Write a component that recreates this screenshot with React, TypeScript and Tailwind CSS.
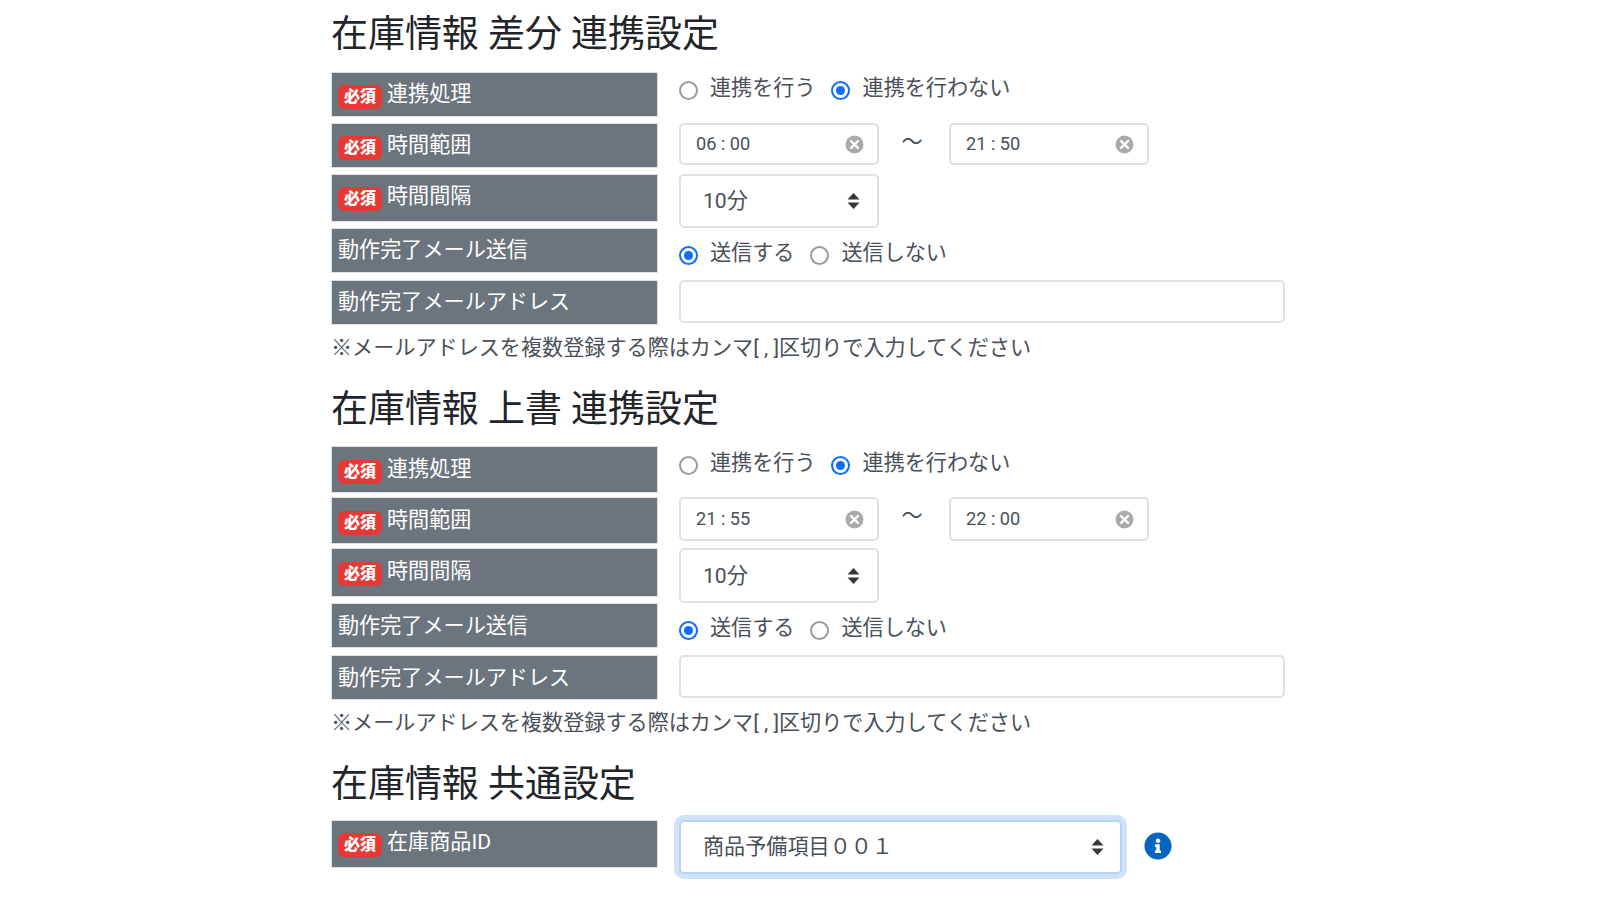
import React from "react";
import { FaInfoCircle } from "react-icons/fa";

const FONT = { fontFamily: 'Roboto, "Noto Sans CJK JP", sans-serif' };

function Badge({ low }: { low?: boolean }) {
  return (
    <span className={`inline-flex items-center justify-center w-[44px] h-[24px] rounded-[6px] bg-[#e53935] text-white text-[16px] font-black leading-none mr-[5px] shrink-0 ${low ? "mt-[13px]" : "mt-[12px]"}`}>
      必須
    </span>
  );
}

function Label({ text, required, h = "h-[45px]", low }: { text: string; required?: boolean; h?: string; low?: boolean }) {
  return (
    <div className={`w-[327px] ${h} shrink-0 bg-[#6c757d] border border-[#dee2e6] flex items-start pl-[6px] text-white text-[21.12px] ${low ? "leading-[44px]" : "leading-[42px]"}`}>
      {required && <Badge low={low} />}
      <span>{text}</span>
    </div>
  );
}

function Radio({ label, checked, outer = "", gap = "ml-[12px]" }: { label: string; checked?: boolean; outer?: string; gap?: string }) {
  return (
    <span className={`inline-flex items-start mr-[15px] ${outer}`}>
      <span className={`w-[19px] h-[19px] rounded-full mt-[9px] shrink-0 flex items-center justify-center border-2 ${checked ? "border-[#0d6efd]" : "border-[#9a9aa3]"}`}>
        {checked && <span className="w-[9px] h-[9px] rounded-full bg-[#0d6efd]" />}
      </span>
      <span className={`${gap} text-[#495057] text-[21.12px] leading-[32px]`}>{label}</span>
    </span>
  );
}

function TimeInput({ value, tall }: { value: string; tall?: boolean }) {
  return (
    <div className={`w-[200px] ${tall ? "h-[44px]" : "h-[42px]"} border-2 border-[#dee2e6] rounded-[5px] flex items-center justify-between pl-[15px] pr-[13px] text-[#495057] text-[18.2px] bg-white`}>
      <span>{value}</span>
      <svg width="19" height="19" viewBox="0 0 19 19">
        <circle cx="9.5" cy="9.5" r="9" fill="#aaaaaa" />
        <path d="M6 6l7 7M13 6l-7 7" stroke="#fff" strokeWidth="2.4" strokeLinecap="round" />
      </svg>
    </div>
  );
}

function Arrows() {
  return (
    <svg width="13" height="16" viewBox="0 0 13 16" fill="#343a40">
      <path d="M6.5 0L12.5 6.5H.5zM6.5 16L.5 9.5H12.5z" />
    </svg>
  );
}

function Select({ value, tall }: { value: string; tall?: boolean }) {
  return (
    <div className={`w-[200px] ${tall ? "h-[55px]" : "h-[54px]"} border-2 border-[#dee2e6] rounded-[5px] flex items-center justify-between pl-[22px] pr-[17px] text-[#495057] text-[21.12px] bg-white`}>
      <span>{value}</span>
      <Arrows />
    </div>
  );
}

function Row({ children, className = "" }: { children: React.ReactNode; className?: string }) {
  return <div className={`flex items-start gap-[21px] ${className}`}>{children}</div>;
}

function Sync({ title, from, to, second }: { title: string; from: string; to: string; second?: boolean }) {
  return (
    <section>
      <h3 className={`text-[36.96px] leading-[44px] text-[#212529] ${second ? "mb-[14px]" : "mb-[15px]"}`}>{title}</h3>
      <Row className="mb-[6px]">
        <Label text="連携処理" required low={second} h={second ? "h-[47px] -mb-[2px]" : "h-[45px]"} />
        <div className={`flex items-start ${second ? "pt-[1px]" : ""}`}>
          <Radio label="連携を行う" />
          <Radio label="連携を行わない" checked gap="ml-[13px]" />
        </div>
      </Row>
      <Row className="mb-[6px]">
        <Label text="時間範囲" required low={second} h={second ? "h-[47px] -mb-[2px]" : "h-[45px]"} />
        <div className={`flex items-start ${second ? "-mb-[2px]" : ""}`}>
          <TimeInput value={from} tall={second} />
          <span className="w-[70px] pr-[4px] text-center text-[#495057] text-[21.12px] leading-[38px]">〜</span>
          <TimeInput value={to} tall={second} />
        </div>
      </Row>
      <Row>
        <Label text="時間間隔" required low={second} h={second ? "h-[49px]" : "h-[48px]"} />
        <Select value="10分" tall={second} />
      </Row>
      <Row className="mb-[7px]">
        <Label text="動作完了メール送信" low={second} />
        <div className="flex items-start pt-[9px]">
          <Radio label="送信する" checked />
          <Radio label="送信しない" outer="ml-[1px]" />
        </div>
      </Row>
      <Row className="mb-[7px]">
        <Label text="動作完了メールアドレス" low={second} />
        <div className="w-[606px] h-[43px] border-2 border-[#dee2e6] rounded-[5px] bg-white" />
      </Row>
      <p className="text-[21.12px] leading-[32px] mb-[1px] text-[#495057]">※メールアドレスを複数登録する際はカンマ[ , ]区切りで入力してください</p>
    </section>
  );
}

export default function App() {
  return (
    <div className="w-[1600px] h-[900px] overflow-hidden bg-white pl-[331px] pt-[13px]" style={FONT}>
      <div className="flex flex-col gap-[23px]">
        <Sync title="在庫情報 差分 連携設定" from="06 : 00" to="21 : 50" />
        <Sync title="在庫情報 上書 連携設定" from="21 : 55" to="22 : 00" second />
        <section>
          <h3 className="text-[36.96px] leading-[44px] text-[#212529] mb-[13px]">在庫情報 共通設定</h3>
          <Row>
            <Label text="在庫商品ID" required h="h-[48px]" />
            <div className="flex items-center">
              <div className="w-[443px] h-[54px] border-2 border-[#b5d4f7] rounded-[5px] ring-[5px] ring-[#cfe2f6] flex items-center justify-between pl-[22px] pr-[16px] text-[#495057] text-[21.12px] bg-white">
                <span>商品予備項目００１</span>
                <Arrows />
              </div>
              <FaInfoCircle className="ml-[22px] text-[#0466c0] text-[28px] -mt-[2px]" />
            </div>
          </Row>
        </section>
      </div>
    </div>
  );
}
